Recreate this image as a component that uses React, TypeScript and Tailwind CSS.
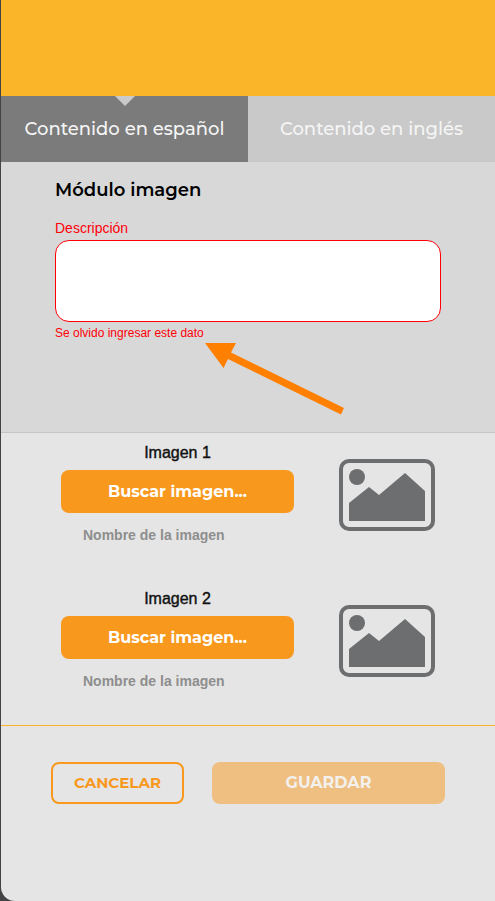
import { useState } from "react";

const display = "font-['Montserrat','Inter',sans-serif]";
const body = "font-['Liberation_Sans',Arial,sans-serif]";

function PictureIcon() {
  return (
    <svg viewBox="0 0 96 72" className="h-18 w-24 shrink-0" aria-hidden="true">
      <rect x="2" y="2" width="92" height="68" rx="8" fill="none" stroke="#6d6e70" strokeWidth="4" />
      <circle cx="18" cy="18" r="8" fill="#6d6e70" />
      <path d="M10 44 30 28 40 36 66 14 86 32V62H10Z" fill="#6d6e70" />
    </svg>
  );
}

function Tab({ label, active, onClick }: { label: string; active: boolean; onClick: () => void }) {
  return (
    <button
      type="button"
      role="tab"
      aria-selected={active}
      onClick={onClick}
      className={`${display} relative h-full flex-1 whitespace-nowrap text-lg leading-6 font-medium text-[#f5f5f5] ${
        active ? "bg-[#7b7b7b]" : "bg-[#c9c9c9]"
      }`}
    >
      {active && (
        <span className="absolute top-0 left-1/2 size-0 -translate-x-1/2 border-x-10 border-t-10 border-x-transparent border-t-[#cacaca]" />
      )}
      {label}
    </button>
  );
}

function ImagePicker({ title }: { title: string }) {
  return (
    <div className="flex items-start gap-[45px]">
      <div className="min-w-0 flex-1">
        <h3 className={`${body} text-center text-base leading-5 text-[#111] [-webkit-text-stroke:0.4px]`}>{title}</h3>
        <button
          type="button"
          className={`${display} mt-[7px] h-[43px] w-full rounded-lg bg-[#f8981d] text-base font-bold text-white`}
        >
          Buscar imagen...
        </button>
        <p className={`${body} mt-3 pl-[22px] text-sm leading-5 font-bold text-[#8e8e8e]`}>Nombre de la imagen</p>
      </div>
      <div className="pt-4">
        <PictureIcon />
      </div>
    </div>
  );
}

export default function App() {
  const [tab, setTab] = useState(0);
  return (
    <div className="min-h-screen bg-[#434345] pl-px">
      <main className="flex min-h-screen flex-col overflow-hidden rounded-bl-[14px] bg-[#e5e5e5]">
        <header className="h-24 bg-[#fab529]" />
        <div role="tablist" className="flex h-[66px]">
          <Tab label="Contenido en español" active={tab === 0} onClick={() => setTab(0)} />
          <Tab label="Contenido en inglés" active={tab === 1} onClick={() => setTab(1)} />
        </div>

        <section className="relative h-[271px] border-b border-[#c4c4c4] bg-[#d8d8d8] px-[54px] pt-4">
          <h2 className={`${display} text-lg leading-6 font-semibold text-black`}>Módulo imagen</h2>
          <label htmlFor="descripcion" className={`${body} mt-4 block text-sm leading-5 text-[#ff0008]`}>
            Descripción
          </label>
          <textarea
            id="descripcion"
            aria-invalid="true"
            aria-describedby="descripcion-error"
            className="mt-0.5 block h-[82px] w-full resize-none rounded-[14px] border border-[#ff0008] bg-white p-3 outline-none"
          />
          <p id="descripcion-error" className={`${body} mt-px text-xs leading-5 text-[#ff0008]`}>
            Se olvido ingresar este dato
          </p>
          <svg viewBox="0 0 140 72" className="absolute top-[181px] left-[203px] h-18 w-[140px]" aria-hidden="true">
            <path d="M1 0H32L27 9.500 140 65 137 71.500 24 16 19.500 25Z" fill="#ff8000" />
          </svg>
        </section>

        <section className="flex flex-col gap-11 border-b border-[#fab529] px-[60px] pt-2.5 pb-[34px]">
          <ImagePicker title="Imagen 1" />
          <ImagePicker title="Imagen 2" />
        </section>

        <footer className="flex gap-7 px-[50px] py-9">
          <button
            type="button"
            className={`${display} h-[42px] w-[133px] rounded-lg border-2 border-[#f8981d] text-[15px] font-bold text-[#f8981d]`}
          >
            CANCELAR
          </button>
          <button
            type="button"
            disabled
            className={`${display} h-[42px] flex-1 rounded-lg bg-[#efbf82] text-base font-bold text-[#f3f1ee]`}
          >
            GUARDAR
          </button>
        </footer>
      </main>
    </div>
  );
}
